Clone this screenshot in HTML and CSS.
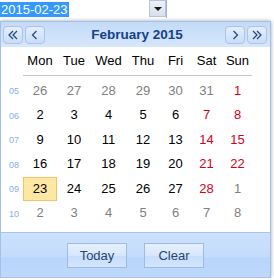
FILE: index.html
```html
<!DOCTYPE html>
<html lang="en">
<head>
    <meta charset="UTF-8">
    <meta name="viewport" content="width=device-width, initial-scale=1.0">
    <title>Date picker</title>
    <link rel="stylesheet" href="styles.css">
</head>
<body>
    <div class="field">
        <span class="value">2015-02-23</span>
        <span class="drop"><span class="arrow"></span></span>
    </div>
    <div class="picker">
        <div class="head">
            <div class="navs">
                <span class="nav"><svg width="10" height="10" viewBox="0 0 10 10"><polyline points="5,1 1,5 5,9" /><polyline points="9,1 5,5 9,9" /></svg></span>
                <span class="nav"><svg width="10" height="10" viewBox="0 0 10 10"><polyline points="6.5,1 2.5,5 6.5,9" /></svg></span>
            </div>
            <div class="title">February 2015</div>
            <div class="navs">
                <span class="nav"><svg width="10" height="10" viewBox="0 0 10 10"><polyline points="3.5,1 7.5,5 3.5,9" /></svg></span>
                <span class="nav"><svg width="10" height="10" viewBox="0 0 10 10"><polyline points="1,1 5,5 1,9" /><polyline points="5,1 9,5 5,9" /></svg></span>
            </div>
        </div>
        <div class="cal">
            <div class="row days">
                <span></span><span>Mon</span><span>Tue</span><span>Wed</span><span>Thu</span><span>Fri</span><span>Sat</span><span>Sun</span>
            </div>
            <div class="rule"></div>
            <div class="weeks">
                <div class="row">
                    <span class="wk">05</span><span class="other">26</span><span class="other">27</span><span class="other">28</span><span class="other">29</span><span class="other">30</span><span class="other">31</span><span class="end">1</span>
                </div>
                <div class="row">
                    <span class="wk">06</span><span>2</span><span>3</span><span>4</span><span>5</span><span>6</span><span class="end">7</span><span class="end">8</span>
                </div>
                <div class="row">
                    <span class="wk">07</span><span>9</span><span>10</span><span>11</span><span>12</span><span>13</span><span class="end">14</span><span class="end">15</span>
                </div>
                <div class="row">
                    <span class="wk">08</span><span>16</span><span>17</span><span>18</span><span>19</span><span>20</span><span class="end">21</span><span class="end">22</span>
                </div>
                <div class="row">
                    <span class="wk">09</span><span class="today">23</span><span>24</span><span>25</span><span>26</span><span>27</span><span class="end">28</span><span class="other">1</span>
                </div>
                <div class="row">
                    <span class="wk">10</span><span class="other">2</span><span class="other">3</span><span class="other">4</span><span class="other">5</span><span class="other">6</span><span class="other">7</span><span class="other">8</span>
                </div>
            </div>
        </div>
        <div class="foot">
            <button class="btn">Today</button>
            <button class="btn">Clear</button>
        </div>
    </div>
</body>
</html>
```

FILE: styles.css
```css
*{
    margin: 0;
    padding: 0;
    box-sizing: border-box;
}
body{
    background: #fff;
    font-family: "Liberation Sans", Arial, sans-serif;
    font-size: 13px;
    color: #000;
}
.field{
    width: 167px;
    height: 18px;
    display: flex;
    justify-content: space-between;
    align-items: flex-start;
    border-right: 1px solid #a5b3c6;
}
.value{
    display: inline-block;
    height: 15px;
    margin-top: 2px;
    padding: 0 1px 0 1px;
    line-height: 15px;
    background: #3399ff;
    color: #fff;
    font-size: 13px;
}
.drop{
    width: 17px;
    height: 17px;
    display: flex;
    justify-content: center;
    align-items: center;
    background: linear-gradient(#eef2f8, #d6dfeb);
    border: 1px solid #b7c4d6;
}
.arrow{
    width: 0;
    height: 0;
    border-left: 4px solid transparent;
    border-right: 4px solid transparent;
    border-top: 4px solid #1a1a1a;
}
.picker{
    width: 271px;
    margin-top: 3px;
    border: 1px solid #a3c0e8;
    background: #fff;
    box-shadow: 0 0 4px rgba(0, 0, 0, 0.35);
}
.head{
    height: 25px;
    display: flex;
    justify-content: space-between;
    align-items: center;
    padding: 0 3px 0 2px;
    background: linear-gradient(#c3daf7, #d7e7fb);
}
.navs{
    display: flex;
    gap: 2px;
}
.nav{
    width: 20px;
    height: 18px;
    display: flex;
    justify-content: center;
    align-items: center;
    border: 1px solid #a9c4e8;
    border-radius: 4px;
    background: linear-gradient(#e3eefc, #c9ddf7);
}
.nav svg polyline{
    fill: none;
    stroke: #2a4a7e;
    stroke-width: 1.3;
}
.title{
    font-weight: bold;
    font-size: 13.5px;
    color: #15428b;
    padding-left: 4px;
}
.cal{
    padding-bottom: 7px;
}
.row{
    display: grid;
    grid-template-columns: 22px 34px 34px 35px 34px 31px 31px 31px;
    height: 24.5px;
    align-items: center;
    text-align: center;
}
.days{
    height: 28px;
}
.rule{
    margin-left: 22px;
    width: 229px;
    height: 1px;
    background: #c6c6c6;
}
.weeks{
    margin-top: 2px;
}
.row span{
    line-height: 24px;
}
.wk{
    font-size: 9px;
    color: #8daee0;
    text-align: right;
    padding-right: 4px;
    padding-top: 1px;
}
.other{
    color: #808080;
}
.end{
    color: #d6001c;
}
.today{
    background: #fee6a3;
    border: 1px solid #f5c06a;
    height: 24px;
    line-height: 22px !important;
    width: 34px;
}
.foot{
    height: 45px;
    display: flex;
    justify-content: center;
    align-items: center;
    gap: 17px;
    padding-top: 1px;
    border-top: 1px solid #a6c4ee;
    background: linear-gradient(#cbe1fd 0%, #c4dcfc 55%, #b9d5fb 56%, #bed8fc 100%);
}
.btn{
    width: 60px;
    height: 25px;
    border: 1px solid #9fbbe5;
    background: linear-gradient(#e6f0fe 0%, #d6e7fd 50%, #c7ddfb 51%, #d3e5fd 100%);
    font-family: "Liberation Sans", Arial, sans-serif;
    font-size: 13px;
    color: #2b4470;
}
```
